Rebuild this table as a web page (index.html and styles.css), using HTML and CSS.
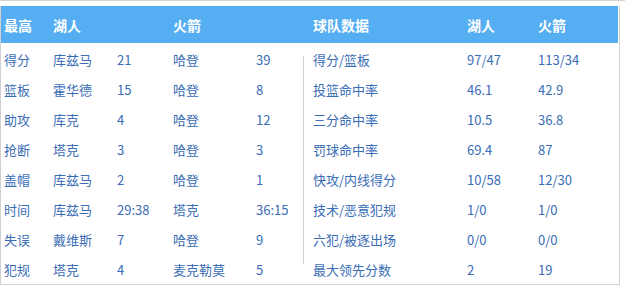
FILE: index.html
```html
<!DOCTYPE html>
<html lang="zh">
<head>
<meta charset="utf-8">
<link rel="stylesheet" href="styles.css">
</head>
<body>
<div class="topline"></div>
<div class="panel">
  <div class="head">
    <div class="left grid">
      <span>最高</span><span>湖人</span><span></span><span>火箭</span><span></span>
    </div>
    <div class="gap"></div>
    <div class="right grid">
      <span>球队数据</span><span>湖人</span><span>火箭</span>
    </div>
  </div>
  <div class="body">
    <div class="left grid">
      <span>得分</span><span>库兹马</span><span>21</span><span>哈登</span><span>39</span>
      <span>篮板</span><span>霍华德</span><span>15</span><span>哈登</span><span>8</span>
      <span>助攻</span><span>库克</span><span>4</span><span>哈登</span><span>12</span>
      <span>抢断</span><span>塔克</span><span>3</span><span>哈登</span><span>3</span>
      <span>盖帽</span><span>库兹马</span><span>2</span><span>哈登</span><span>1</span>
      <span>时间</span><span>库兹马</span><span>29:38</span><span>塔克</span><span>36:15</span>
      <span>失误</span><span>戴维斯</span><span>7</span><span>哈登</span><span>9</span>
      <span>犯规</span><span>塔克</span><span>4</span><span>麦克勒莫</span><span>5</span>
    </div>
    <div class="divider"></div>
    <div class="right grid">
      <span>得分/篮板</span><span>97/47</span><span>113/34</span>
      <span>投篮命中率</span><span>46.1</span><span>42.9</span>
      <span>三分命中率</span><span>10.5</span><span>36.8</span>
      <span>罚球命中率</span><span>69.4</span><span>87</span>
      <span>快攻/内线得分</span><span>10/58</span><span>12/30</span>
      <span>技术/恶意犯规</span><span>1/0</span><span>1/0</span>
      <span>六犯/被逐出场</span><span>0/0</span><span>0/0</span>
      <span>最大领先分数</span><span>2</span><span>19</span>
    </div>
  </div>
</div>
</body>
</html>
```
FILE: styles.css
```css
* { box-sizing: border-box; }
body {
  margin: 0;
  background: #fff;
  font-family: "Noto Sans CJK SC", "Noto Sans", sans-serif;
  font-size: 13px;
  color: #3a6db5;
}
.topline {
  height: 1px;
  background: #d4d4d4;
  margin-bottom: 5px;
}
.panel {
  width: 620px;
  border-left: 1px solid #d0d0d0;
  border-right: 1px solid #d0d0d0;
  border-bottom: 1px solid #d0d0d0;
}
.head, .body {
  display: flex;
}
.head {
  background: #55adf2;
  color: #fff;
  font-weight: bold;
  font-size: 14px;
  height: 37px;
  margin-right: 1px;
}
.grid {
  display: grid;
  align-items: center;
}
.left {
  width: 302px;
  padding-left: 3px;
  grid-template-columns: 49px 64px 56px 83px 47px;
}
.right {
  flex: 1;
  padding-left: 9px;
  grid-template-columns: 154px 71px 1fr;
}
.head .grid {
  grid-auto-rows: 37px;
}
.body .grid {
  grid-auto-rows: 30px;
  padding-top: 1px;
}
.gap {
  width: 1px;
}
.divider {
  width: 1px;
  background: #d0d0d0;
  margin: 13px 0 20px;
}
span {
  white-space: nowrap;
}
```
